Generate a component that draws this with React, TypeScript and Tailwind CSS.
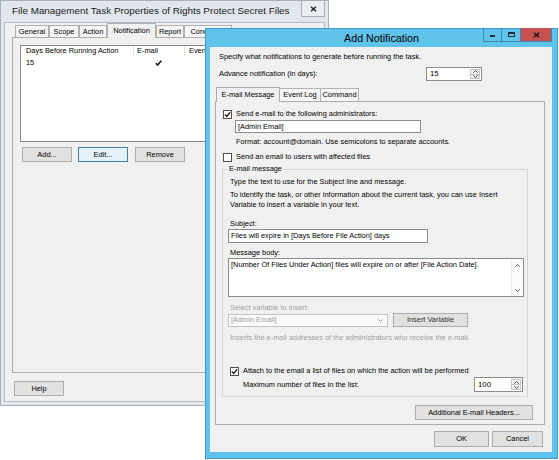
import React from 'react';

const txt = 'text-[7.4px] leading-[10px] whitespace-nowrap';

function Chevron({ dir, color = '#4a4a4a' }: { dir: 'up' | 'down'; color?: string }) {
  return (
    <svg width="5" height="3" viewBox="0 0 5 3">
      <path
        d={dir === 'up' ? 'M0.3 2.7 L2.5 0.5 L4.7 2.7' : 'M0.3 0.3 L2.5 2.5 L4.7 0.3'}
        fill="none"
        stroke={color}
        strokeWidth="1"
      />
    </svg>
  );
}

function Check({ checked = false }: { checked?: boolean }) {
  return (
    <div className="w-[9px] h-[9px] shrink-0 flex items-center justify-center border border-[#4d4d4d] bg-white">
      {checked && (
        <svg width="7" height="7" viewBox="0 0 7 7">
          <path d="M0.9 3.6 L2.7 5.4 L6.1 1.2" fill="none" stroke="#1f1f1f" strokeWidth="1.4" />
        </svg>
      )}
    </div>
  );
}

function Button({ label, className = '', focused = false }: { label: string; className?: string; focused?: boolean }) {
  return (
    <div
      className={`flex items-center justify-center border text-[7.4px] ${
        focused ? 'border-[#3c7fb1] bg-[#e5f1fb]' : 'border-[#adadad] bg-[#e1e1e1]'
      } ${className}`}
    >
      {label}
    </div>
  );
}

function Spin({ value, className }: { value: string; className: string }) {
  return (
    <div className={`flex border border-[#8c8c8c] bg-white ${className}`}>
      <div className="flex-1 flex items-center pl-[3px] text-[7.8px]">{value}</div>
      <div className="w-[10px] my-[1px] mr-[1px] flex flex-col border border-[#c4c4c4] bg-[#f2f2f2]">
        <div className="flex-1 flex items-center justify-center border-b border-[#c4c4c4]">
          <Chevron dir="up" />
        </div>
        <div className="flex-1 flex items-center justify-center">
          <Chevron dir="down" />
        </div>
      </div>
    </div>
  );
}

function PropertiesWindow() {
  const tabs = [
    { label: 'General', w: 'w-[34px]' },
    { label: 'Scope', w: 'w-[30px]' },
    { label: 'Action', w: 'w-[28px]' },
    { label: 'Notification', w: 'w-[49px]', active: true },
    { label: 'Report', w: 'w-[28px]' },
    { label: 'Conditions', w: 'w-[48px]' },
  ];

  return (
    <div className="absolute left-0 top-0 w-[329px] h-[406px] flex flex-col border border-[#a7b1bb] bg-[#e1e7ed]">
      {/* title bar */}
      <div className="relative h-[21px] flex items-center pl-[11px] text-[9.9px] text-[#1b1b1b] whitespace-nowrap">
        File Management Task Properties of Rights Protect Secret Files
        <div className="absolute right-[3px] top-[-1px] w-[24px] h-[17px] flex items-center justify-center border border-[#a3adb7] bg-[#eaeef2]">
          <svg width="7" height="6" viewBox="0 0 7 6">
            <path d="M1 0.8 L6 5.2 M6 0.8 L1 5.2" stroke="#222" strokeWidth="1.5" />
          </svg>
        </div>
      </div>

      {/* client */}
      <div className="mx-[3px] mb-[3px] h-[380px] flex flex-col border border-[#b3bcc5] bg-[#f0f0f0]">
        <div className="h-[14px] flex items-end pl-[10px]">
          {tabs.map((t) => (
            <div
              key={t.label}
              className={`${t.w} shrink-0 flex items-center justify-center border border-b-0 border-[#b0b0b0] ${txt} ${
                t.active ? 'h-[15px] -mb-px relative z-10 bg-[#f0f0f0]' : 'h-[12px] bg-[#f5f5f5]'
              }`}
            >
              {t.label}
            </div>
          ))}
        </div>

        <div className="ml-[7px] mr-[4px] h-[336px] flex flex-col p-[7px] border border-[#adadad]">
          {/* list view */}
          <div className="h-[97px] border border-[#828790] bg-white flex flex-col">
            <div className={`h-[11px] flex ${txt}`}>
              <div className="w-[113px] pl-[5px] border-r border-[#e3e3e3]">Days Before Running Action</div>
              <div className="w-[51px] pl-[3px] border-r border-[#e3e3e3]">E-mail</div>
              <div className="pl-[4px]">Event Log</div>
            </div>
            <div className={`mt-[1px] h-[10px] flex items-center ${txt}`}>
              <div className="w-[113px] pl-[5px]">15</div>
              <div className="w-[51px] pl-[21px] flex items-center">
                <svg width="7" height="6" viewBox="0 0 7 6">
                  <path d="M0.8 3.2 L2.6 5 L6.3 0.8" fill="none" stroke="#111" strokeWidth="1.6" />
                </svg>
              </div>
            </div>
          </div>

          <div className="mt-[5px] flex">
            <Button label="Add..." className="ml-[2px] w-[50px] h-[15px]" />
            <Button label="Edit..." focused className="ml-[6px] w-[50px] h-[15px]" />
            <Button label="Remove" className="ml-[7px] w-[50px] h-[15px]" />
          </div>
        </div>

        <Button label="Help" className="mt-[8px] ml-[9px] w-[50px] h-[15px]" />
      </div>
    </div>
  );
}

function NotificationWindow() {
  const gray = 'text-[#a0a0a0]';

  return (
    <div className="absolute left-[205px] top-[28px] w-[353px] h-[431px] flex flex-col border border-[#3b9bcb] bg-[#5fc3ea]">
      {/* title bar */}
      <div className="relative h-[18px] flex items-center justify-center text-[10.7px] text-black">
        Add Notification
        <div className="absolute right-[5px] top-[-1px] h-[14px] flex border border-t-0 border-[#3a89b4]">
          <div className="w-[18px] flex items-end justify-center pb-[4px] border-r border-[#3a89b4]">
            <div className="w-[5px] h-[2px] bg-[#1f2f3a]" />
          </div>
          <div className="w-[19px] flex items-center justify-center border-r border-[#3a89b4]">
            <div className="w-[7px] h-[5px] border border-t-2 border-[#1f2f3a]" />
          </div>
          <div className="w-[30px] flex items-center justify-center bg-[#c75050]">
            <svg width="7" height="6" viewBox="0 0 7 6">
              <path d="M1 0.8 L6 5.2 M6 0.8 L1 5.2" stroke="#2e1c1c" strokeWidth="1.6" />
            </svg>
          </div>
        </div>
      </div>

      {/* client */}
      <div className="ml-[4px] mr-[5px] h-[405px] flex flex-col bg-[#f0f0f0]">
        <div className={`mt-[5px] pl-[9px] ${txt}`}>Specify what notifications to generate before running the task.</div>
        <div className="mt-[5px] pl-[9px] h-[14px] flex items-center">
          <div className={`w-[207px] ${txt}`}>Advance notification (in days):</div>
          <Spin value="15" className="w-[56px] h-[14px]" />
        </div>

        {/* tabs */}
        <div className="mt-[5px] h-[15px] flex items-end pl-[6px]">
          <div className={`w-[64px] h-[15px] -mb-px relative z-10 flex items-center justify-center border border-b-0 border-[#adadad] bg-[#f0f0f0] ${txt}`}>
            E-mail Message
          </div>
          <div className={`w-[41px] h-[13px] flex items-center justify-center border border-b-0 border-l-0 border-[#b4b4b4] bg-[#f5f5f5] ${txt}`}>
            Event Log
          </div>
          <div className={`w-[38px] h-[13px] flex items-center justify-center border border-b-0 border-l-0 border-[#b4b4b4] bg-[#f5f5f5] ${txt}`}>
            Command
          </div>
        </div>

        {/* tab page */}
        <div className="ml-[5px] w-[330px] h-[324px] flex flex-col border border-[#adadad]">
          <div className="mt-[7px] ml-[7px] h-[10px] flex items-center gap-[4px]">
            <Check checked />
            <span className={txt}>Send e-mail to the following administrators:</span>
          </div>
          <div className={`mt-[1px] ml-[19px] w-[186px] h-[13px] flex items-center pl-[2px] border border-[#8c8c8c] bg-white ${txt}`}>
            [Admin Email]
          </div>
          <div className={`mt-[4px] ml-[20px] ${txt}`}>Format: account@domain. Use semicolons to separate accounts.</div>
          <div className="mt-[5px] ml-[7px] h-[10px] flex items-center gap-[4px]">
            <Check />
            <span className={txt}>Send an email to users with affected files</span>
          </div>

          {/* group box */}
          <div className="relative mt-[7px] ml-[6px] w-[306px] h-[228px] flex flex-col border border-[#d5d5d5]">
            <span className={`absolute left-[5px] top-[-6px] px-[1px] bg-[#f0f0f0] ${txt}`}>E-mail message</span>
            <div className={`mt-[7px] ml-[7px] ${txt}`}>Type the text to use for the Subject line and message.</div>
            <div className={`mt-[3px] ml-[7px] ${txt}`}>
              To identify the task, or other information about the current task, you can use Insert
              <br />
              Variable to insert a variable in your text.
            </div>
            <div className={`mt-[9px] ml-[7px] ${txt}`}>Subject:</div>
            <div className={`ml-[5px] w-[200px] h-[14px] flex items-center pl-[2px] border border-[#8c8c8c] bg-white ${txt}`}>
              Files will expire in [Days Before File Action] days
            </div>
            <div className={`mt-[5px] ml-[7px] ${txt}`}>Message body:</div>
            <div className="ml-[5px] w-[296px] h-[39px] flex border border-[#8c8c8c] bg-white">
              <div className={`flex-1 pl-[2px] pt-[1px] ${txt}`}>
                [Number Of Files Under Action] files will expire on or after [File Action Date].
              </div>
              <div className="w-[12px] flex flex-col justify-between bg-[#fbfbfb] border-l border-[#ececec]">
                <div className="h-[12px] flex items-center justify-center">
                  <Chevron dir="up" color="#606060" />
                </div>
                <div className="h-[12px] flex items-center justify-center">
                  <Chevron dir="down" color="#606060" />
                </div>
              </div>
            </div>
            <div className={`mt-[6px] ml-[7px] ${gray} ${txt}`}>Select variable to insert:</div>
            <div className="ml-[5px] h-[14px] flex items-center gap-[5px]">
              <div className={`w-[160px] h-[13px] flex items-center justify-between pl-[2px] pr-[4px] border border-[#c3c3c3] bg-[#fafafa] ${gray} ${txt}`}>
                [Admin Email]
                <Chevron dir="down" color="#9a9a9a" />
              </div>
              <Button label="Insert Variable" className="w-[75px] h-[14px] text-[#333]" />
            </div>
            <div className={`mt-[6px] ml-[7px] ${gray} ${txt}`}>
              Inserts the e-mail addresses of the administrators who receive the e-mail.
            </div>
            <div className="mt-[23px] ml-[7px] h-[10px] flex items-center gap-[4px]">
              <Check checked />
              <span className={txt}>Attach to the email a list of files on which the action will be performed</span>
            </div>
            <div className="mt-[1px] h-[15px] flex items-center">
              <div className={`ml-[20px] w-[231px] ${txt}`}>Maximum number of files in the list:</div>
              <Spin value="100" className="w-[49px] h-[15px]" />
            </div>
          </div>

          <Button label="Additional E-mail Headers..." className="mt-[8px] self-end mr-[11px] w-[118px] h-[15px]" />
        </div>

        <div className="mt-[6px] pr-[9px] flex justify-end gap-[3px]">
          <Button label="OK" className="w-[55px] h-[16px]" />
          <Button label="Cancel" className="w-[51px] h-[16px]" />
        </div>
      </div>
    </div>
  );
}

export default function App() {
  return (
    <div className="relative w-[559px] h-[460px] overflow-hidden bg-white text-black font-['Liberation_Sans',Arial,sans-serif]">
      <PropertiesWindow />
      <NotificationWindow />
    </div>
  );
}
